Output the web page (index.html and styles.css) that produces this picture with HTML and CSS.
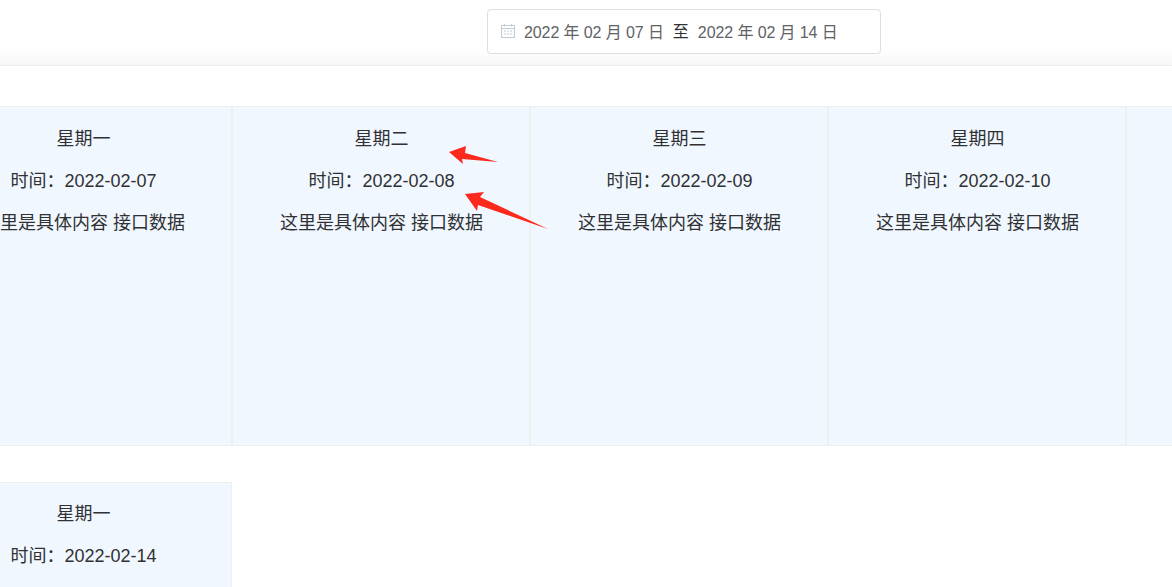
FILE: index.html
```html
<!DOCTYPE html>
<html lang="zh-CN">
<head>
<meta charset="utf-8">
<title>日程</title>
<link rel="stylesheet" href="styles.css">
</head>
<body>
<header class="topbar">
  <div class="range">
    <svg class="cal" width="14" height="14" viewBox="0 0 14 14" fill="none" stroke="#c0ccd4" stroke-width="1">
      <rect x="0.5" y="1.5" width="13" height="12"/>
      <path d="M0.5 4.5H13.5M3.5 0V2.5M10.5 0V2.5"/>
      <path d="M3 7H11M3 10H11" stroke-dasharray="2 1"/>
    </svg>
    <span class="date">2022 年 02 月 07 日</span>
    <span class="sep">至</span>
    <span class="date">2022 年 02 月 14 日</span>
  </div>
</header>
<main class="board">
  <section class="week">
    <article class="day"><p>星期一</p><p>时间：2022-02-07</p><p>这里是具体内容 接口数据</p></article>
    <article class="day"><p>星期二</p><p>时间：2022-02-08</p><p>这里是具体内容 接口数据</p></article>
    <article class="day"><p>星期三</p><p>时间：2022-02-09</p><p>这里是具体内容 接口数据</p></article>
    <article class="day"><p>星期四</p><p>时间：2022-02-10</p><p>这里是具体内容 接口数据</p></article>
    <article class="day"><p>星期五</p><p>时间：2022-02-11</p><p>这里是具体内容 接口数据</p></article>
  </section>
  <section class="week">
    <article class="day"><p>星期一</p><p>时间：2022-02-14</p><p>这里是具体内容 接口数据</p></article>
  </section>
</main>
<svg class="arrows" width="120" height="100" viewBox="0 0 120 100">
  <path fill="#fb2a1c" d="M0 6L17 0L16 7L49 16L13 13L14 18Z"/>
  <path fill="#fb2a1c" d="M16 48L35 46L31 51L99 83L29 59L28 65Z"/>
</svg>
</body>
</html>
```
FILE: styles.css
```css
html, body {
  margin: 0;
  height: 100%;
  overflow: hidden;
  background: #fff;
}
body {
  position: relative;
  font-family: "Liberation Sans", "Noto Sans CJK SC", sans-serif;
  font-size: 18px;
  color: #303133;
}
.topbar {
  box-sizing: border-box;
  height: 66px;
  padding: 9px 0 0 487px;
  border-bottom: 1px solid #eeeeee;
  background: linear-gradient(to bottom, #fff 0, #fff 48px, #f6f6f6 65px);
}
.range {
  box-sizing: border-box;
  width: 394px;
  height: 45px;
  display: flex;
  align-items: center;
  padding: 0 0 2px 13px;
  border: 1px solid #dcdfe6;
  border-radius: 4px;
  background: #fff;
  font-size: 16px;
  letter-spacing: -0.1px;
  color: #606266;
}
.cal { flex: none; margin-right: 9px; margin-top: 1px; }
.date { white-space: nowrap; }
.sep { margin: -1px 9px 0 9px; color: #303133; font-size: 16px; letter-spacing: 0; }
.board {
  padding-top: 40px;
  margin-left: -66px;
  display: flex;
  flex-direction: column;
  gap: 36px;
}
.week {
  display: flex;
  width: 1490px;
}
.day {
  box-sizing: border-box;
  flex: none;
  width: 298px;
  height: 340px;
  padding: 11px 0 0 1px;
  background: #f0f7ff;
  border: 1px solid #efefef;
  text-align: center;
}
.week + .week .day { padding-top: 10px; }
.day p { margin: 0; line-height: 42px; white-space: nowrap; }
.arrows {
  position: absolute;
  left: 449px;
  top: 146px;
}
```
